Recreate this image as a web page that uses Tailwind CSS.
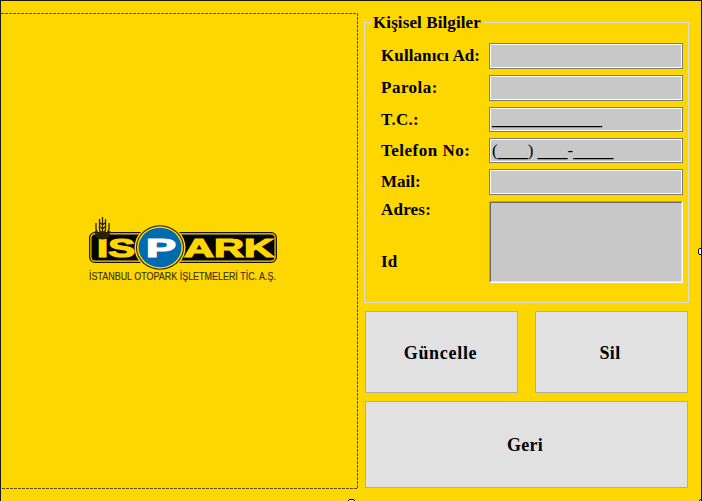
<!DOCTYPE html>
<html lang="tr">
<head>
<meta charset="utf-8">
<title>Kişisel Bilgiler</title>
<script src="https://cdn.jsdelivr.net/npm/@tailwindcss/browser@4"></script>
</head>
<body class="w-[702px] h-[501px] overflow-hidden">
<main class="relative w-[702px] h-[501px] overflow-hidden bg-[#ffd700] border-t border-l border-r border-[#1b1b1b] flex font-['Liberation_Serif',serif] font-bold text-[17px] leading-[20px] text-black">
  <section class="relative w-[357px] h-[476px] mt-[12px] shrink-0">
    <svg class="block" width="357" height="476" viewBox="1 13 357 476">
      <path d="M1 13.5H357.5V488.5H1" fill="none" stroke="#5c4d00" stroke-dasharray="3 1"/>
      <g>
        <rect x="89.700" y="232.700" width="186.600" height="29.600" rx="5" fill="none" stroke="#151309" stroke-width="1.300"/>
        <rect x="91.500" y="234.500" width="183" height="26" rx="3.500" fill="#050505"/>
        <ellipse cx="160" cy="247.500" rx="25.500" ry="23.500" fill="#ffd700"/>
        <ellipse cx="160" cy="247.500" rx="24" ry="22.200" fill="#151309"/>
        <ellipse cx="160" cy="247.500" rx="23" ry="21.200" fill="#ffd700"/>
        <ellipse cx="160" cy="247.500" rx="21.500" ry="19.700" fill="#006bb0"/>
        <g font-family="'Liberation Sans',sans-serif" font-weight="700" fill="#ffd700" stroke="#ffd700" stroke-width="1.200" font-size="25">
          <text x="97" y="257" textLength="38" lengthAdjust="spacingAndGlyphs">IS</text>
          <text x="146" y="257" textLength="30" lengthAdjust="spacingAndGlyphs" fill="#fff" stroke="#fff">P</text>
          <text x="184" y="257" textLength="90" lengthAdjust="spacingAndGlyphs">ARK</text>
        </g>
        <path d="M95 233.500H110V236Q107 239.500 102.500 239.500Q98 239.500 95 236Z" fill="#2a2303"/>
        <g fill="none" stroke="#2a2303" stroke-width="1.300">
          <path d="M102.500 217v20M99.500 219v10q0 4 3 5q3-1 3-5v-10M96 223v6q1 5 6.500 6q5.500-1 6.500-6v-6M95 231q2 6 7.500 6q5.500 0 7.500-6M99 222l3.500 3l3.500-3M99 226l3.500 3l3.500-3M99 230l3.500 3l3.500-3"/>
        </g>
        <text x="89" y="280" textLength="187" lengthAdjust="spacingAndGlyphs" font-family="'Liberation Sans',sans-serif" font-weight="400" font-size="10.500" fill="#3a3204" stroke="#3a3204" stroke-width=".15">İSTANBUL OTOPARK İŞLETMELERİ TİC. A.Ş.</text>
      </g>
    </svg>
  </section>

  <section class="ml-[6px] w-[325px] shrink-0 pt-[21px]">
    <div class="relative w-[325px] h-[281px] border border-[#dcdcdc] pt-[20px] pl-[16px]">
      <h1 class="absolute left-[6px] -top-[10px] bg-[#ffd700] pl-[2px] pr-[3px] whitespace-nowrap"><span class="tracking-[0.1px]">Kişisel Bilgiler</span></h1>
      <div class="flex h-[26px] mb-[6px]"><label class="w-[108px] pt-[3px] whitespace-nowrap tracking-[0.1px]">Kullanıcı Ad:</label><div class="w-[194px] border border-[#7a7a7a] bg-[#c8c8c8] outline-1 -outline-offset-2 outline-white"></div></div>
      <div class="flex h-[26px] mb-[6px]"><label class="w-[108px] pt-[3px] whitespace-nowrap tracking-[0.500px]">Parola:</label><div class="w-[194px] border border-[#7a7a7a] bg-[#c8c8c8] outline-1 -outline-offset-2 outline-white"></div></div>
      <div class="flex h-[25px] mb-[6px]"><label class="w-[108px] pt-[3px] whitespace-nowrap tracking-[0.3px]">T.C.:</label><div class="w-[194px] border border-[#7a7a7a] bg-[#c8c8c8] outline-1 -outline-offset-2 outline-white font-normal pl-[2px] text-[20px] leading-[19px]">___________</div></div>
      <div class="flex h-[25px] mb-[6px]"><label class="w-[108px] pt-[3px] whitespace-nowrap tracking-[0.5px]">Telefon No:</label><div class="w-[194px] border border-[#7a7a7a] bg-[#c8c8c8] outline-1 -outline-offset-2 outline-white font-normal pl-[2px] whitespace-nowrap text-[20px] leading-[20px]"><span class="text-[17px]">(</span>___<span class="text-[17px]">) </span>___<span class="text-[17px]">-</span>____</div></div>
      <div class="flex h-[26px] mb-[6px]"><label class="w-[108px] pt-[3px] whitespace-nowrap">Mail:</label><div class="w-[194px] border border-[#7a7a7a] bg-[#c8c8c8] outline-1 -outline-offset-2 outline-white"></div></div>
      <div class="flex h-[82px]"><div class="w-[108px] flex flex-col gap-[32px] -mt-px tracking-[0.2px]"><span>Adres:</span><span>Id</span></div><div class="w-[194px] border border-t-[#a0a0a0] border-l-[#a0a0a0] border-b-white border-r-white"><div class="h-full bg-[#c8c8c8] border border-t-[#696969] border-l-[#696969] border-b-[#e3e3e3] border-r-[#e3e3e3]"></div></div></div>
    </div>
    <div class="mt-[8px] ml-px w-[323px] grid grid-cols-[153px_153px] gap-x-[17px] gap-y-[8px]">
      <button class="h-[82px] bg-[#e1e1e1] border border-[#adadad] pr-[2px] pt-[2px] text-[18px] tracking-[0.700px]">Güncelle</button>
      <button class="h-[82px] bg-[#e1e1e1] border border-[#adadad] pr-[3px] pt-[2px] text-[18px] tracking-[0.4px]">Sil</button>
      <button class="col-span-2 h-[87px] bg-[#e1e1e1] border border-[#adadad] pr-[3px] text-[18px] tracking-[0.3px]">Geri</button>
    </div>
  </section>
  <i class="absolute left-[697px] top-[247px] w-[7px] h-[7px] rounded-[2px] bg-white border border-black"></i>
  <i class="absolute left-[347px] top-[498px] w-[7px] h-[7px] rounded-[2px] bg-white border border-black"></i>
  <i class="absolute left-[698px] top-[498px] w-[7px] h-[7px] rounded-[2px] bg-white border border-black"></i>
</main>
</body>
</html>
